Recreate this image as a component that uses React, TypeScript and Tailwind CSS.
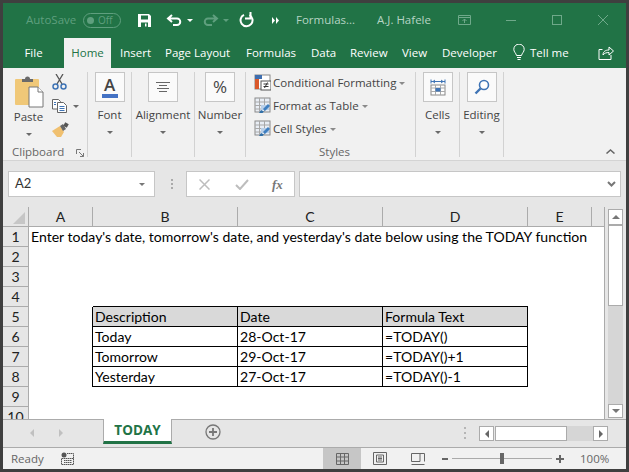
import React from 'react';

const uiFont = "font-['Open_Sans','Noto_Sans',sans-serif]";
const cellFont = "font-['Lato','Open_Sans',sans-serif]";

const Caret = ({ className = 'border-t-[#6a6a6a]' }: { className?: string }) => (
  <span className={`inline-block w-0 h-0 border-l-[3px] border-r-[3px] border-t-[3px] border-l-transparent border-r-transparent ${className}`} />
);

// Big ribbon button: boxed icon, label, dropdown caret
const BigGroup = ({ width, label, children }: { width: string; label: string; children: React.ReactNode }) => (
  <div className={`${width} h-[85px] mt-[4px] flex flex-col items-center border-r border-[#d2d2d2] shrink-0`}>
    <div className="w-[30px] h-[30px] bg-[#fafafa] border border-[#c6c6c6] flex items-center justify-center">{children}</div>
    <div className="text-[11.5px] leading-[16px] mt-[5px] text-[#444] whitespace-nowrap">{label}</div>
    <div className="mt-[5px] leading-[0] h-[6px]"><Caret /></div>
  </div>
);

const StyleIcon = ({ cond }: { cond?: boolean }) =>
  cond ? (
    <svg width="17" height="17" viewBox="0 0 17 17">
      <rect x="1" y="1" width="15" height="14" fill="#fff" stroke="#8a8a8a" />
      <rect x="1" y="1" width="7" height="4" fill="#3f6fb0" />
      <rect x="1" y="5" width="4" height="5" fill="#d9582b" />
      <rect x="1" y="10" width="4" height="5" fill="#d9582b" />
      <rect x="7" y="7" width="10" height="9" fill="#fff" stroke="#555" />
      <path d="M9.5 10h5M9.5 12.5h5M13.5 8.5l-3 5.5" stroke="#333" fill="none" />
    </svg>
  ) : (
    <svg width="17" height="17" viewBox="0 0 17 17">
      <rect x="1" y="1" width="15" height="14" fill="#e9eef5" stroke="#8a8a8a" />
      <path d="M1 5h15M1 8.5h15M1 12h15M5.5 1v14M10.5 1v14" stroke="#a8a8a8" />
      <path d="M7 8h8v5H7z" fill="#b9cfe8" />
      <path d="M9 12l5-5 2 2-5 5z" fill="#3f7fc0" />
      <path d="M5 16l2-3 3 1.5-1.5 1.5z" fill="#2f6fa8" />
    </svg>
  );

const StyleRow = ({ label, cond }: { label: string; cond?: boolean }) => (
  <div className="h-[23px] flex items-center whitespace-nowrap">
    <span className="w-[19px] shrink-0"><StyleIcon cond={cond} /></span>
    <span className="text-[11.5px] text-[#444]">{label}</span>
    <span className="ml-[3px] mb-[2px] leading-[0]"><Caret className="border-t-[#8a8a8a]" /></span>
  </div>
);

const navTabs = [
  { label: 'Insert', w: 'w-[45px]' },
  { label: 'Page Layout', w: 'w-[81px]' },
  { label: 'Formulas', w: 'w-[65px]' },
  { label: 'Data', w: 'w-[39px]' },
  { label: 'Review', w: 'w-[52px]' },
  { label: 'View', w: 'w-[40px]' },
  { label: 'Developer', w: 'w-[71px]' },
];

const rows = [
  { n: 1 }, { n: 2 }, { n: 3 }, { n: 4 },
  { n: 5, cells: ['Description', 'Date', 'Formula Text'], head: true },
  { n: 6, cells: ['Today', '28-Oct-17', '=TODAY()'] },
  { n: 7, cells: ['Tomorrow', '29-Oct-17', '=TODAY()+1'] },
  { n: 8, cells: ['Yesterday', '27-Oct-17', '=TODAY()-1'] },
  { n: 9 }, { n: 10 },
];

export default function App() {
  return (
    <div className={`w-[629px] h-[472px] overflow-hidden bg-[#3f3f3f] p-[3px] ${uiFont}`}>
      <div className="w-[623px] h-[466px] flex flex-col overflow-hidden bg-white">
        {/* Title bar */}
        <div className="h-[34px] shrink-0 bg-[#217346] flex items-center text-[11.5px] whitespace-nowrap">
          <span className="ml-[23px] w-[50px] text-[#5f9f7e]">AutoSave</span>
          <div className="ml-[7px] w-[38px] h-[15px] rounded-full border border-[#5f9f7e] flex items-center pl-[3px] gap-[4px]">
            <span className="w-[7px] h-[7px] rounded-full bg-[#5f9f7e]" />
            <span className="text-[10px] leading-none text-[#5f9f7e]">Off</span>
          </div>
          <svg className="ml-[16px]" width="15" height="15" viewBox="0 0 15 15">
            <path d="M1 1h11l2 2v11H1z" fill="#fff" />
            <rect x="4" y="2.5" width="7" height="4" fill="#217346" />
            <rect x="4" y="9.5" width="7" height="4.5" fill="#217346" />
            <rect x="8" y="10.5" width="1.5" height="3" fill="#fff" />
          </svg>
          <svg className="ml-[14px]" width="16" height="15" viewBox="0 0 16 15">
            <path d="M6 2L2 5.5 6 9M2.5 5.5H11a3.2 3.2 0 0 1 0 6.5H7" fill="none" stroke="#fff" strokeWidth="2" />
          </svg>
          <span className="ml-[5px] leading-[0]"><Caret className="border-t-white" /></span>
          <svg className="ml-[10px]" width="16" height="15" viewBox="0 0 16 15">
            <path d="M10 2l4 3.5L10 9M13.5 5.5H5a3.2 3.2 0 0 0 0 6.5h4" fill="none" stroke="#5f9f7e" strokeWidth="2" />
          </svg>
          <span className="ml-[4px] leading-[0]"><Caret className="border-t-[#5f9f7e]" /></span>
          <svg className="ml-[10px]" width="15" height="16" viewBox="0 0 15 16">
            <path d="M5 2.8A6 6 0 1 0 10.5 3" fill="none" stroke="#fff" strokeWidth="2" />
            <path d="M11.5 0v6.500H6" fill="none" stroke="#fff" strokeWidth="2" />
          </svg>
          <svg className="ml-[18px]" width="7" height="7" viewBox="0 0 7 7"><path d="M0 0l3 3.5L0 7zM4 0l3 3.5L4 7z" fill="#fff" /></svg>
          <span className="ml-[17px] w-[81px] text-[#b6d4c4]">Formulas...</span>
          <span className="w-[81px] text-[#b6d4c4]">A.J. Hafele</span>
          <svg width="13" height="11" viewBox="0 0 13 11"><path d="M.5.500h12v9H.5zM.5 2.500h12M6.500 8V4M4.500 6l2-2 2 2" fill="none" stroke="#6fa98a" /></svg>
          <span className="ml-[35px] w-[10px] h-px bg-[#6fa98a]" />
          <span className="ml-[36px] w-[10px] h-[10px] border border-[#6fa98a]" />
          <svg className="ml-[36px]" width="10" height="10" viewBox="0 0 10 10"><path d="M0 0l10 10M10 0L0 10" stroke="#6fa98a" /></svg>
        </div>

        {/* Tabs */}
        <div className="h-[31px] shrink-0 bg-[#217346] flex items-end text-[11.5px] text-white whitespace-nowrap">
          <span className="h-[31px] w-[61px] flex items-center justify-center">File</span>
          <span className="h-[30px] w-[47px] bg-[#f1f1f1] text-[#217346] flex items-center justify-center">Home</span>
          <div className="h-[31px] flex items-center pl-[9px]">
            {navTabs.map((t) => (
              <span key={t.label} className={t.w}>{t.label}</span>
            ))}
            <svg width="12" height="17" viewBox="0 0 12 17">
              <path d="M3.500 11.500C3 9 .8 8 .8 5.300a5.200 5.200 0 0 1 10.400 0c0 2.700-2.200 3.700-2.700 6.200zM4 13.500h4M4.500 15.500h3" fill="none" stroke="#fff" />
            </svg>
            <span className="ml-[5px] w-[68px]">Tell me</span>
            <svg width="16" height="15" viewBox="0 0 16 15">
              <path d="M4.500 4.500H1v10h12V10" fill="none" stroke="#fff" />
              <path d="M5 10c0-3.500 2.500-5 6-5V2l4.500 4L11 10V7.500C8.500 7.500 6.500 8 5 10z" fill="none" stroke="#fff" />
            </svg>
          </div>
        </div>

        {/* Ribbon */}
        <div className="h-[93px] shrink-0 bg-[#f1f1f1] border-b border-[#d4d4d4] flex">
          {/* Clipboard */}
          <div className="w-[85px] h-[85px] mt-[4px] border-r border-[#d2d2d2] shrink-0 flex flex-col">
            <div className="flex h-[74px]">
              <div className="w-[47px] flex flex-col items-center pl-[4px] pt-[4px]">
                <svg width="30" height="32" viewBox="0 0 30 32">
                  <rect x="1" y="3" width="24" height="26" rx="1" fill="#f0c878" />
                  <path d="M8 4V3h3a2.500 2.500 0 0 1 5 0h3v3H8z" fill="#6a6a6a" />
                  <path d="M15 11h9l5 5v15H15z" fill="#fff" stroke="#777" />
                  <path d="M24 11v5h5" fill="#fff" stroke="#777" />
                </svg>
                <span className="text-[11.5px] leading-[16px] mt-[1px] text-[#444]">Paste</span>
                <span className="leading-[0] mt-[5px]"><Caret /></span>
              </div>
              <div className="flex flex-col gap-[9px] ml-[2px] pt-[2px]">
                <svg width="15" height="16" viewBox="0 0 15 16">
                  <path d="M4 0l6 10M11 0L5 10" stroke="#555" strokeWidth="1.300" fill="none" />
                  <circle cx="3.500" cy="12.500" r="2.500" fill="none" stroke="#3f74b5" strokeWidth="1.500" />
                  <circle cx="11.500" cy="12.500" r="2.500" fill="none" stroke="#3f74b5" strokeWidth="1.500" />
                </svg>
                <div className="flex items-center gap-[6px]">
                  <svg width="15" height="14" viewBox="0 0 15 14">
                    <path d="M.5.500h6l2 2V10H.5z" fill="#fff" stroke="#666" />
                    <path d="M5.500 3.500h6l3 3v7h-9z" fill="#fff" stroke="#666" />
                    <path d="M7.500 7.500h5M7.500 9.500h5M7.500 11.500h5M2 3.500h2M2 5.500h2" stroke="#3f74b5" />
                  </svg>
                  <Caret />
                </div>
                <svg width="17" height="15" viewBox="0 0 17 15">
                  <path d="M0 9l8-5 4 6-3 5H5z" fill="#f0c070" />
                  <path d="M8 4l3-2 3 5-3 2z" fill="#666" />
                  <rect x="12" y="1" width="4" height="4" transform="rotate(30 14 3)" fill="#555" />
                </svg>
              </div>
            </div>
            <div className="flex items-center h-[11px] pl-[9px] text-[11.5px] leading-[11px] text-[#666]">
              Clipboard
              <svg className="ml-[12px] mt-[2px]" width="8" height="8" viewBox="0 0 8 8">
                <path d="M.5 5V.5H5M7.500 7.500L3 3M7.500 4v3.500H4" fill="none" stroke="#777" />
              </svg>
            </div>
          </div>

          <BigGroup width="w-[44px]" label="Font">
            <div className="flex flex-col items-center">
              <span className="text-[17px] leading-[16px] font-semibold text-[#444]">A</span>
              <span className="w-[16px] h-[4px] mt-[1px] bg-[#4472c4]" />
            </div>
          </BigGroup>
          <BigGroup width="w-[63px]" label="Alignment">
            <svg width="14" height="11" viewBox="0 0 14 11">
              <path d="M0 .5h14M3 3.500h8M1 6.500h12M3 9.500h8" stroke="#666" />
            </svg>
          </BigGroup>
          <BigGroup width="w-[51px]" label="Number">
            <span className="text-[17px] text-[#444]">%</span>
          </BigGroup>

          {/* Styles */}
          <div className="w-[170px] h-[85px] mt-[4px] border-r border-[#d2d2d2] shrink-0 flex flex-col pl-[8px]">
            <div className="h-[74px] -translate-y-px">
              <StyleRow label="Conditional Formatting" cond />
              <StyleRow label="Format as Table" />
              <StyleRow label="Cell Styles" />
            </div>
            <div className="text-center h-[11px] text-[11.5px] leading-[11px] text-[#666]">Styles</div>
          </div>

          <BigGroup width="w-[44px]" label="Cells">
            <svg width="16" height="17" viewBox="0 0 16 17">
              <path d="M1 2.500h14M1 .5v4M15 .5v4M5 1l-2 1.500L5 4M11 1l2 1.500L11 4" fill="none" stroke="#3f74b5" />
              <rect x="1" y="6" width="14" height="10" fill="#fff" stroke="#888" />
              <path d="M1 9h14M1 12.500h14M5.500 6v10M10.500 6v10" stroke="#aaa" />
              <rect x="5.500" y="9" width="5" height="3.500" fill="#3f74b5" />
            </svg>
          </BigGroup>
          <BigGroup width="w-[44px]" label="Editing">
            <svg width="16" height="16" viewBox="0 0 16 16">
              <circle cx="10" cy="6" r="4.500" fill="#fff" stroke="#3f74b5" strokeWidth="1.600" />
              <path d="M6.500 9.500L1.500 14.500" stroke="#3f74b5" strokeWidth="2.400" />
            </svg>
          </BigGroup>

          <div className="flex-1 flex items-end justify-end pr-[11px] pb-[6px]">
            <svg width="9" height="5" viewBox="0 0 9 5"><path d="M.5 4.500l4-3.500 4 3.500" fill="none" stroke="#666" strokeWidth="1.500" /></svg>
          </div>
        </div>

        {/* Formula bar */}
        <div className="h-[46px] shrink-0 bg-[#e6e6e6] flex items-start pt-[10px]">
          <div className={`ml-[5px] w-[147px] h-[26px] bg-white border border-[#c6c6c6] flex items-center justify-between pl-[6px] pr-[9px] text-[13px] text-[#333] ${cellFont}`}>
            A2
            <Caret className="border-t-[#777]" />
          </div>
          <div className="ml-[15px] w-[3px] h-[26px] flex flex-col items-center justify-center gap-[2px]">
            <span className="w-[2px] h-[2px] bg-[#aaa]" /><span className="w-[2px] h-[2px] bg-[#aaa]" /><span className="w-[2px] h-[2px] bg-[#aaa]" />
          </div>
          <div className="ml-[13px] w-[109px] h-[26px] bg-white border border-[#c6c6c6] flex items-center pl-[12px]">
            <svg width="11" height="11" viewBox="0 0 11 11"><path d="M.5.500l10 10M10.500.500l-10 10" stroke="#bdbdbd" strokeWidth="1.500" /></svg>
            <svg className="ml-[25px]" width="14" height="11" viewBox="0 0 14 11"><path d="M1 6l4 4 8-9" stroke="#bdbdbd" strokeWidth="2" fill="none" /></svg>
            <span className="ml-[23px] font-['Liberation_Serif',serif] italic font-bold text-[13px] leading-none text-[#777]">fx</span>
          </div>
          <div className="ml-[4px] w-[322px] h-[26px] bg-white border border-[#c6c6c6] flex items-center justify-end pr-[4px]">
            <svg width="9" height="6" viewBox="0 0 9 6"><path d="M1 1l3.500 3.500L8 1" fill="none" stroke="#777" strokeWidth="2" /></svg>
          </div>
        </div>

        {/* Sheet and vertical scrollbar */}
        <div className="h-[212px] shrink-0 flex overflow-hidden">
          <div className={`w-[602px] border-r border-[#ababab] bg-white overflow-hidden text-[14.05px] text-black ${cellFont}`}>
            <div className="grid grid-cols-[26px_64px_145px_145px_145px_64px_12px] auto-rows-[20px]">
              <div className="bg-[#e6e6e6] border-r border-b border-[#ababab] flex items-end justify-end pr-[3px] pb-[2px]">
                <svg width="12" height="12" viewBox="0 0 12 12"><path d="M12 0v12H0z" fill="#c6c6c6" /></svg>
              </div>
              {['A', 'B', 'C', 'D', 'E', ''].map((c, i) => (
                <div key={i} className={`bg-[#e6e6e6] border-b border-[#ababab] flex items-center justify-center text-[#222] ${i < 5 ? 'border-r' : ''}`}>{c}</div>
              ))}
              {rows.map((r) => (
                <React.Fragment key={r.n}>
                  <div className="bg-[#e6e6e6] border-r border-b border-[#ababab] flex items-center justify-center text-[#222]">{r.n}</div>
                  <div className={`flex items-center pl-[2px] whitespace-nowrap ${r.cells ? 'border-r border-black' : ''}`}>
                    {r.n === 1 ? "Enter today's date, tomorrow's date, and yesterday's date below using the TODAY function" : ''}
                  </div>
                  {[0, 1, 2].map((i) => (
                    <div
                      key={i}
                      className={`flex items-center pl-[2px] whitespace-nowrap ${r.cells ? 'border-r border-b border-black' : ''} ${r.n === 4 ? 'border-b border-black' : ''} ${r.head ? 'bg-[#d9d9d9]' : ''}`}
                    >
                      {r.cells?.[i]}
                    </div>
                  ))}
                  <div />
                  <div />
                </React.Fragment>
              ))}
            </div>
          </div>
          <div className="flex-1 bg-[#e6e6e6] flex flex-col items-center pb-[1px] pt-[2px]">
            <div className="w-[15px] h-[16px] bg-white border border-[#ababab] flex items-center justify-center">
              <span className="w-0 h-0 border-l-[4px] border-r-[4px] border-b-[4px] border-l-transparent border-r-transparent border-b-[#777]" />
            </div>
            <div className="w-[15px] h-[81px] bg-white border border-[#ababab]" />
            <div className="w-[15px] flex-1 bg-[#d6d6d6]" />
            <div className="w-[15px] h-[14px] bg-white border border-[#ababab] flex items-center justify-center">
              <span className="w-0 h-0 border-l-[4px] border-r-[4px] border-t-[4px] border-l-transparent border-r-transparent border-t-[#777]" />
            </div>
          </div>
        </div>

        {/* Sheet tabs */}
        <div className="h-[29px] shrink-0 bg-[#e6e6e6] border-t border-b border-[#ababab] flex">
          <span className="ml-[27px] mt-[9px] w-0 h-0 border-t-[4px] border-b-[4px] border-r-[4px] border-t-transparent border-b-transparent border-r-[#c0c0c0]" />
          <span className="ml-[25px] mt-[9px] w-0 h-0 border-t-[4px] border-b-[4px] border-l-[4px] border-t-transparent border-b-transparent border-l-[#c0c0c0]" />
          <div className="ml-[40px] -mt-px w-[69px] h-[25px] bg-white border-x border-[#ababab] border-b-[3px] border-b-[#217346] flex items-center justify-center text-[13.5px] font-bold text-[#217346]">TODAY</div>
          <svg className="ml-[33px] mt-[4px]" width="16" height="16" viewBox="0 0 16 16">
            <circle cx="8" cy="8" r="7" fill="none" stroke="#777" strokeWidth="1.300" />
            <path d="M8 4v8M4 8h8" stroke="#777" strokeWidth="1.800" />
          </svg>
          <div className="ml-[242px] mt-[6px] w-[3px] h-[14px] flex flex-col items-center justify-between py-[1px]">
            <span className="w-[2px] h-[2px] bg-[#b5b5b5]" /><span className="w-[2px] h-[2px] bg-[#b5b5b5]" /><span className="w-[2px] h-[2px] bg-[#b5b5b5]" />
          </div>
          <div className="ml-[13px] mt-[6px] w-[15px] h-[15px] bg-white border border-[#ababab] flex items-center justify-center">
            <span className="w-0 h-0 border-t-[4px] border-b-[4px] border-r-[4px] border-t-transparent border-b-transparent border-r-[#666]" />
          </div>
          <div className="ml-px mt-[6px] w-[72px] h-[15px] bg-white border border-[#ababab]" />
          <div className="mt-[6px] w-[26px] h-[15px] bg-[#d6d6d6]" />
          <div className="mt-[6px] w-[15px] h-[15px] bg-white border border-[#ababab] flex items-center justify-center">
            <span className="w-0 h-0 border-t-[4px] border-b-[4px] border-l-[4px] border-t-transparent border-b-transparent border-l-[#666]" />
          </div>
        </div>

        {/* Status bar */}
        <div className="flex-1 bg-[#f1f1f1] flex items-center text-[11.5px] text-[#666] whitespace-nowrap">
          <span className="ml-[8px] w-[50px]">Ready</span>
          <svg width="13" height="13" viewBox="0 0 13 13">
            <circle cx="3" cy="3" r="2.500" fill="#555" />
            <path d="M6 1.500h6.500V12.500H.5V6.500h12M3 8.500h8M3 10.500h8" fill="none" stroke="#555" strokeDasharray="1.500 .5" />
          </svg>
          <div className="ml-[249px] w-[38px] h-full bg-[#c6c6c6] flex items-center justify-center">
            <svg width="13" height="12" viewBox="0 0 13 12"><path d="M.5.500h12v11H.5zM.5 4h12M.5 8h12M4.500.5v11M8.500.5v11" fill="none" stroke="#666" /></svg>
          </div>
          <svg className="ml-[12px]" width="14" height="13" viewBox="0 0 14 13"><path d="M.5.500h13v12H.5zM3.500 3h7v7h-7zM5 5h4M5 6.500h4M5 8h4" fill="none" stroke="#666" /></svg>
          <svg className="ml-[24px]" width="14" height="12" viewBox="0 0 14 12"><path d="M.5 8.500V.5h13v8M.5 8.500H9V.5M.5 11.500h13" fill="none" stroke="#666" /></svg>
          <span className="ml-[17px] w-[6px] h-[2px] bg-[#666]" />
          <div className="ml-[4px] w-[100px] h-px bg-[#aaa] flex items-center justify-center">
            <span className="w-[4px] h-[11px] bg-[#666]" />
          </div>
          <svg className="ml-[4px]" width="8" height="8" viewBox="0 0 8 8"><path d="M0 4h8M4 0v8" stroke="#666" strokeWidth="2" /></svg>
          <span className="ml-[16px]">100%</span>
        </div>
      </div>
    </div>
  );
}
